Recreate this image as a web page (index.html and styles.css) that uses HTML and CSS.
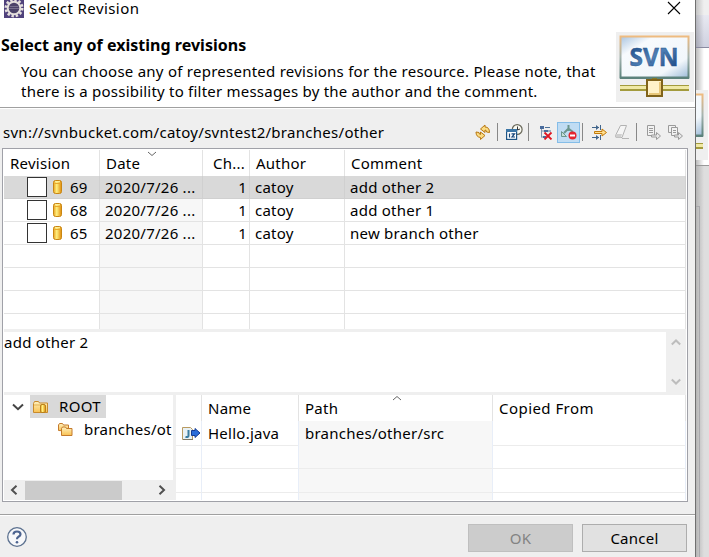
FILE: index.html
```html
<!DOCTYPE html>
<html lang="en">
<head>
<meta charset="utf-8">
<title>Select Revision</title>
<link rel="stylesheet" href="styles.css">
</head>
<body>
<svg class="defs" width="0" height="0">
  <defs>
    <linearGradient id="gold" x1="0" x2="1" y1="0" y2="0"><stop offset="0" stop-color="#e8a020"/><stop offset=".4" stop-color="#fff080"/><stop offset="1" stop-color="#e08a08"/></linearGradient>
    <linearGradient id="folder" x1="0" x2="0" y1="0" y2="1"><stop offset="0" stop-color="#fff2c0"/><stop offset="1" stop-color="#f8c050"/></linearGradient>
    <linearGradient id="edge" x1="0" x2="0" y1="0" y2="1"><stop offset="0" stop-color="#eebb80"/><stop offset=".5" stop-color="#a5b4b0"/><stop offset="1" stop-color="#5c827c"/></linearGradient>
    <linearGradient id="screen" x1="0" x2="1" y1="0" y2="1"><stop offset="0" stop-color="#a9c4e0"/><stop offset=".25" stop-color="#f7fafd"/><stop offset=".75" stop-color="#f2f7fb"/><stop offset="1" stop-color="#9dbbd8"/></linearGradient>
    <linearGradient id="blue" x1="0" x2="1" y1="0" y2="1"><stop offset="0" stop-color="#123f7c"/><stop offset=".5" stop-color="#4f7fb5"/><stop offset="1" stop-color="#123f7c"/></linearGradient>
    <symbol id="cyl" viewBox="0 0 10 16"><rect x=".5" y="1.5" width="8" height="13" rx="2" fill="url(#gold)" stroke="#c98612"/><path d="M1.500 4.500h6" stroke="#e9a82c" fill="none"/><path d="M2 2.700h5" stroke="#fff3a0"/></symbol>
    <symbol id="banner" viewBox="0 0 78 70">
      <rect width="78" height="70" fill="#efefef"/>
      <rect x="4.5" y="4.500" width="68" height="41" fill="url(#screen)" stroke="url(#edge)" stroke-width="2"/>
      <path d="M4 46h69" stroke="#5c827c" stroke-width="2"/>
      <path d="M36 46h5v4h-5z" fill="#827b2b"/>
      <path d="M4 56h69" stroke="#a39b3d" stroke-width="6"/><path d="M4 55.500h69" stroke="#f0e9a5" stroke-width="3"/>
      <rect x="31" y="48" width="15" height="16" fill="#fff2c9" stroke="#80631a" stroke-width="2"/><path d="M33 62h11V50" fill="none" stroke="#e8c779" stroke-width="2"/>
      <text x="13.500" y="34" textLength="49" lengthAdjust="spacingAndGlyphs" class="svn">SVN</text>
    </symbol>
  </defs>
</svg>
<div class="desktop">
  <main class="dialog">
    <header class="head">
      <div class="titlebar">
        <svg class="app" width="20" height="18" viewBox="0 0 20 18"><rect width="20" height="18" fill="#50427c"/><circle cx="10" cy="8" r="8" fill="none" stroke="#e4dfdc" stroke-width="3" stroke-dasharray="2.4 1.8"/><circle cx="10" cy="8" r="6.3" fill="#4c4368" stroke="#e4dfdc" stroke-width="2"/><path d="M5.500 6.500h9M5 8.500h10" stroke="#77708c"/></svg>
        <span>Select Revision</span>
        <svg class="close" width="14" height="14" viewBox="0 0 14 14"><path d="M1 1l12 12M13 1L1 13" stroke="#000" stroke-width="1.1"/></svg>
      </div>
      <div class="intro">
        <div class="words">
          <h1>Select any of existing revisions</h1>
          <p><span>You can choose any of represented revisions for the resource. Please note, that</span><br><span class="t-p2">there is a possibility to filter messages by the author and the comment.</span></p>
        </div>
        <svg width="78" height="70"><use href="#banner"/></svg>
      </div>
    </header>
    <div class="urlbar">
      <span class="t-url">svn://svnbucket.com/catoy/svntest2/branches/other</span>
      <div class="tools">
        <svg class="i1" width="16" height="16" viewBox="0 0 16 16"><path d="M5.500 5L10 1v2q4.500 0 4.500 5.500l-3-.5q0-2-1.500-2v2.500z" fill="#fbdc83" stroke="#b87812"/><path d="M10 11.500L5.500 15.500v-2Q1 13 1 8l3 .5q0 2 1.500 2V8z" fill="#fbdc83" stroke="#b87812"/></svg>
        <i class="sep s1"></i>
        <svg class="i2" width="17" height="16" viewBox="0 0 17 16"><circle cx="11.200" cy="5.500" r="4.900" fill="#fafaf2" stroke="#69685a" stroke-width="1.200"/><path d="M11.500 2.500v3.500l2.500-1" fill="none" stroke="#333"/><rect x=".6" y="5.600" width="10" height="9.800" fill="#fff" stroke="#1d5485" stroke-width="1.200"/><path d="M0 5h11v3H0z" fill="#3c76a6"/><path d="M3.500 9.500v4M5.500 9.900h3L6 13h3" fill="none" stroke="#164679" stroke-width="1.200"/></svg>
        <i class="sep s2"></i>
        <svg class="i3" width="14" height="15" viewBox="0 0 14 15"><path d="M2.500 3v9.500M2.500 6h3M2.500 12h3" stroke="#8092ae" fill="none"/><path d="M1 1h4v3H1zM5 5h4v2H5zM4 11h3v2H4z" fill="#486b9c"/><path d="M6 2.500h5M9 6h3" stroke="#4e7198"/><path d="M5.500 7.500l7 7M12.500 7.500l-7 7" stroke="#df1524" stroke-width="1.800"/></svg>
        <span class="active"><svg width="18" height="18" viewBox="0 0 18 18"><path d="M8.500 2v6M8 6L4 10M9 6l4 3" fill="none" stroke="#6b958d" stroke-width="2"/><path d="M1.500 8.500v5h5z" fill="#c6ded6" stroke="#6b958d"/><circle cx="12.500" cy="12.500" r="4" fill="#e52630"/><path d="M10 12.500h5" stroke="#fff" stroke-width="2"/></svg></span>
        <i class="sep s3"></i>
        <svg class="i4" width="17" height="17" viewBox="0 0 17 17"><path d="M1 3.500h7M1 13.500h7M9.500 1v5M9.500 11v5" stroke="#42658b"/><path d="M5 1l3 2.500L5 6zM5 11l3 2.500L5 16z" fill="#42658b"/><path d="M3.500 7.500H11V5l4.500 3.500L11 12V9.500H3.500z" fill="#ffdf91" stroke="#c37a08"/></svg>
        <svg class="i5" width="16" height="16" viewBox="0 0 16 16"><path d="M6.500 1.500h6L8 13.500H2q-1-2 0-3z" fill="#f5f5f5" stroke="#b2b2b2"/><path d="M2 10h6l-1 3.500H2z" fill="#cfcfcf"/><path d="M8 14.500h7" stroke="#b5b5b5"/></svg>
        <i class="sep s4"></i>
        <svg class="i6" width="15" height="16" viewBox="0 0 15 16"><path d="M1.500 1.500h7v10h-7zM3 4.500h4M3 6.500h4M3 8.500h4" fill="#f2f2f2" stroke="#9a9a9a"/><path d="M5.500 11h5V8.500l4 3.500-4 3.500V13h-5z" fill="#e9e9e9" stroke="#9a9a9a"/></svg>
        <svg class="i7" width="17" height="16" viewBox="0 0 17 16"><path d="M1.500 8.500v-7h7v2M1.500 8.500h3M4.500 3.500h6v8h-6zM6 6.500h3M6 8.500h3" fill="#f2f2f2" stroke="#9a9a9a"/><path d="M7.500 11h4V8.500l4 3.500-4 3.500V13h-4z" fill="#e9e9e9" stroke="#9a9a9a"/></svg>
      </div>
    </div>
    <section class="panel">
      <div class="revs">
        <div class="row hd"><span>Revision</span><span>Date<svg class="sort down" width="10" height="6" viewBox="0 0 10 6"><path d="M1 1l4 3.500L9 1" fill="none" stroke="#666"/></svg></span><span>Ch...</span><span>Author</span><span>Comment</span></div>
        <div class="row sel"><span class="chk"><i></i><svg width="10" height="16"><use href="#cyl"/></svg>69</span><span>2020/7/26 ...</span><span class="n">1</span><span>catoy</span><span>add other 2</span></div>
        <div class="row"><span class="chk"><i></i><svg width="10" height="16"><use href="#cyl"/></svg>68</span><span>2020/7/26 ...</span><span class="n">1</span><span>catoy</span><span>add other 1</span></div>
        <div class="row"><span class="chk"><i></i><svg width="10" height="16"><use href="#cyl"/></svg>65</span><span>2020/7/26 ...</span><span class="n">1</span><span>catoy</span><span>new branch other</span></div>
        <div class="row"><span></span><span></span><span></span><span></span><span></span></div>
        <div class="row"><span></span><span></span><span></span><span></span><span></span></div>
        <div class="row"><span></span><span></span><span></span><span></span><span></span></div>
        <div class="row last"><span></span><span></span><span></span><span></span><span></span></div>
      </div>
      <div class="message"><p>add other 2</p><div class="vscroll"><svg width="10" height="7" viewBox="0 0 10 7"><path d="M.8 5.500L5 1.500l4.200 4" fill="none" stroke="#bdbdbd" stroke-width="2"/></svg><svg width="10" height="7" viewBox="0 0 10 7"><path d="M.8 1.500L5 5.500l4.200-4" fill="none" stroke="#bdbdbd" stroke-width="2"/></svg></div></div>
      <div class="lower">
        <div class="tree">
          <div class="root"><svg class="tw" width="12" height="8" viewBox="0 0 12 8"><path d="M1 1.500l5 4.700 5-4.700" fill="none" stroke="#444" stroke-width="2"/></svg><span class="node"><svg width="16" height="14" viewBox="0 0 16 14"><path d="M.5 12.500v-9l1-2h4l1 1.500h8v9.500z" fill="url(#folder)" stroke="#c88a2c"/><path d="M1 5h9" stroke="#e3b354"/><rect x="7.500" y="4.500" width="5" height="8" rx="1.500" fill="url(#gold)" stroke="#b9811b"/></svg><span class="t-root">ROOT</span></span></div>
          <div class="child"><svg width="15" height="15" viewBox="0 0 15 15"><path d="M.5 8.500V3l1-1.500h3l1 1.500h5v6z" fill="url(#folder)" stroke="#c47a2c"/><path d="M3.500 13.500v-7l1-1.500h3l1 1.500h5.500v7z" fill="url(#folder)" stroke="#c47a2c"/></svg><span>branches/ot</span></div>
          <div class="hscroll"><svg width="8" height="10" viewBox="0 0 8 10"><path d="M6.500 .8L2 5l4.500 4.200" fill="none" stroke="#505050" stroke-width="2"/></svg><i></i><svg width="8" height="10" viewBox="0 0 8 10"><path d="M1.500 .8L6 5 1.500 9.200" fill="none" stroke="#505050" stroke-width="2"/></svg></div>
        </div>
        <div class="files">
          <div class="frow fhd"><span></span><span>Name</span><span>Path<svg class="sort up" width="10" height="6" viewBox="0 0 10 6"><path d="M1 5l4-3.500L9 5" fill="none" stroke="#666"/></svg></span><span class="t-copy">Copied From</span></div>
          <div class="frow"><span class="ic"><svg width="19" height="15" viewBox="0 0 19 15"><path d="M.5 1.500h8l2 2v10H.5z" fill="#e8f1f5" stroke="#b99b61"/><path d="M1 13.500h10" stroke="#7e7865"/><path d="M6.500 4v5.500q0 2-3 1.500" fill="none" stroke="#3a7ca0" stroke-width="2"/><path d="M9.500 4.500H13V2.500l5 4.500-5 4.500v-2H9.500z" fill="#2b6dd9" stroke="#173c91"/></svg></span><span>Hello.java</span><span>branches/other/src</span><span></span></div>
          <div class="frow"><span></span><span></span><span></span><span></span></div>
          <div class="frow"><span></span><span></span><span></span><span></span></div>
          <div class="frow flast"><span></span><span></span><span></span><span></span></div>
        </div>
      </div>
    </section>
    <footer class="foot">
      <svg class="help" width="22" height="22" viewBox="0 0 22 22"><circle cx="11" cy="11" r="9.300" fill="#f7f8fa" stroke="#5d7290" stroke-width="1.300"/><path d="M7.500 8.500Q7.500 5.500 11 5.500t3.500 2.700q0 1.500-2 2.600Q11 11.600 11 13.200" fill="none" stroke="#4d6490" stroke-width="2.200"/><circle cx="11" cy="16.200" r="1.300" fill="#4d6490"/></svg>
      <button class="btn off">OK</button>
      <button class="btn">Cancel</button>
    </footer>
  </main>
  <aside class="behind"><div class="b1"></div><div class="b2"></div><div class="b3"><svg width="78" height="70"><use href="#banner"/></svg></div><div class="b4"><div class="frame"></div></div></aside>
</div>
</body>
</html>
```
FILE: styles.css
```css
* { box-sizing: border-box; }
body { margin: 0; overflow: hidden; font: 15px/20px "Noto Sans", "Open Sans", sans-serif; letter-spacing: .25px; color: #000; background: #efefef; }
svg { display: block; flex: none; overflow: hidden; }
.defs { position: absolute; }
span { white-space: nowrap; }
.svn { font: bold 25px "Noto Sans", sans-serif; fill: url(#blue); stroke: #28568e; stroke-width: .5; letter-spacing: 0; }
.desktop { display: flex; width: 709px; height: 557px; }
.dialog { width: 696px; height: 557px; border-right: 1px solid #707070; background: #efefef; }
.head { height: 109px; background: #fff; border-bottom: 1px solid #fff; box-shadow: inset 0 -1px #a0a0a0; }
.titlebar { display: flex; height: 32px; padding-left: 4px; }
.titlebar span { margin: 0 auto 0 5px; line-height: 17px; letter-spacing: .43px; height: 21px; }
.close { margin: 1px 14px 0 0; }
.intro { display: flex; justify-content: space-between; padding-right: 1px; }
.words { padding: 4px 0 0 1px; }
h1 { margin: 0; font-size: 16px; line-height: 19px; letter-spacing: .02px; white-space: nowrap; }
p { margin: 0; }
.words p { margin: 6px 0 0 20px; line-height: 20px; }
.t-p2 { letter-spacing: .22px; }
.t-url { letter-spacing: .28px; }
.urlbar { display: flex; justify-content: space-between; height: 39px; padding: 13px 11px 0 3px; }
.tools { display: flex; height: 22px; align-items: center; margin-top: -1px; }
.sep { flex: none; width: 1px; height: 18px; background: #888; }
.i1 { margin-right: 6px; }
.s1 { margin-right: 8px; }
.i2 { margin-right: 5px; }
.s2 { margin-right: 10px; }
.i3 { margin-right: 4px; }
.active { display: grid; place-items: center; width: 23px; height: 21px; border: 1px solid #85bde8; background: #c0dcf3; margin-right: 2px; }
.s3 { margin-right: 8px; }
.i4 { margin-right: 6px; }
.i5 { margin-right: 6px; }
.s4 { margin-right: 9px; }
.i6 { margin-right: 6px; }
.panel { width: 686px; height: 354px; margin-left: 2px; border: 1px solid #a0a1a8; padding: 1px; background: #fff; }
.revs { height: 179px; }
.row { display: grid; grid-template-columns: 96px 103px 47px 95px 341px; height: 23px; }
.row > span { position: relative; border-right: 1px solid #e3e3e3; border-bottom: 1px solid #e3e3e3; padding-left: 5px; line-height: 22px; }
.row > span:nth-child(2) { background: #f7f7f7; }
.row.hd { height: 26px; }
.row.hd > span { background: #fff; border-bottom: 0; line-height: 27px; padding-left: 6px; }
.row.hd > span:nth-child(3) { padding-left: 10px; }
.row.sel > span { background: #d9d9d9; border-color: #d0d0d0; }
.row.last { height: 15px; }
.row.last > span { border-bottom: 0; }
.row > .chk { display: flex; align-items: center; padding-left: 23px; }
.chk i { width: 20px; height: 20px; border: 1px solid #333; background: #fff; margin-right: 6px; }
.chk svg { margin-right: 7px; }
.row > .n { text-align: right; padding-right: 2px; }
.sort { position: absolute; }
.down { left: 47px; top: 1px; }
.up { left: 93px; top: 0; }
.message { display: flex; justify-content: space-between; height: 66px; border-top: 3px solid #efefef; border-bottom: 3px solid #efefef; }
.vscroll { display: flex; flex-direction: column; justify-content: space-between; align-items: center; width: 20px; background: #efefef; padding: 7px 0; }
.lower { display: flex; height: 105px; }
.tree { display: flex; flex-direction: column; width: 172px; border-right: 3px solid #efefef; overflow: hidden; }
.root { display: flex; align-items: center; height: 23px; padding-left: 8px; }
.tw { margin-right: 6px; }
.node { display: flex; align-items: center; width: 76px; height: 23px; background: #d9d9d9; padding-left: 3px; line-height: 22px; }
.node svg { margin-right: 10px; }
.t-root { letter-spacing: .3px; height: 23px; }
.child { display: flex; align-items: center; height: 22px; padding-left: 54px; }
.child svg { margin-right: 11px; }
.hscroll { display: flex; align-items: center; height: 20px; margin-top: auto; background: #efefef; padding: 0 7px 0 6px; }
.hscroll i { width: 97px; height: 19px; background: #cbcbcb; margin: 0 auto 0 7px; }
.files { width: 510px; }
.frow { display: grid; grid-template-columns: 26px 97px 194px 193px; height: 24px; }
.frow > span { position: relative; border-right: 1px solid #e8eef8; border-bottom: 1px solid #ececec; padding-left: 6px; line-height: 24px; }
.frow > span:nth-child(3) { background: #f7f7f7; }
.frow.fhd { height: 26px; }
.frow.fhd > span { background: #fff; border-color: #e3e3e3; border-bottom: 0; line-height: 27px; }
.t-copy { letter-spacing: .45px; }
.frow.flast { height: 7px; }
.flast > span { border-bottom: 0; }
.frow > .ic { padding: 5px 0 0 6px; }
.foot { display: flex; height: 43px; margin-top: 12px; border-top: 1px solid #a0a0a0; box-shadow: inset 0 1px #fff; padding: 9px 8px 0 6px; }
.help { margin: 2px auto 0 0; }
.btn { width: 105px; height: 28px; margin-left: 9px; padding: 0; border: 1px solid #adadad; background: #e1e1e1; font: inherit; letter-spacing: .25px; color: #000; border-radius: 0; }
.btn.off { background: #ccc; border-color: #bfbfbf; color: #838383; }
.behind { width: 13px; height: 557px; background: #e4e4e4; }
.b1 { height: 15px; background: linear-gradient(90deg, #c4c4c4, #efefef 8px); }
.b2 { height: 33px; background: linear-gradient(90deg, #0003, #0000 8px), linear-gradient(#e8e9f1, #cfd1e0); border-bottom: 1px solid #8a8aa0; }
.b3 { display: flex; justify-content: flex-end; align-items: flex-end; height: 117px; padding: 0 1px 5px 0; background: linear-gradient(90deg, #bbb, #fff 8px); overflow: hidden; }
.b4 { height: 392px; border-top: 1px solid #999; background: linear-gradient(90deg, #b5b5b5, #dedede 8px); padding-top: 40px; }
.frame { width: 4px; height: 351px; border: solid #a9a9ad; border-width: 1px 1px 0 0; }
```
